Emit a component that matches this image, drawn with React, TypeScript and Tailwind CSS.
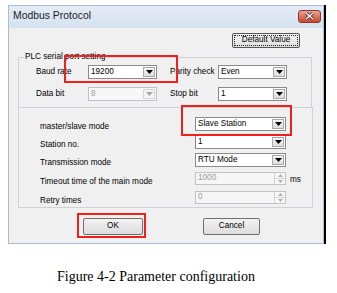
import React from "react";

const ui = { fontFamily: '"Liberation Sans", Arial, sans-serif' };

function Arrow({ color = "#000" }: { color?: string }) {
  return (
    <svg width="7" height="4" viewBox="0 0 7 4">
      <path d="M0 0H7L3.5 4Z" fill={color} />
    </svg>
  );
}

function Combo({
  value,
  w,
  disabled,
}: {
  value: string;
  w: string;
  disabled?: boolean;
}) {
  return (
    <div
      className={`flex h-[14px] items-stretch border ${w} ${
        disabled
          ? "border-[#c2c2c2] bg-[#f7f7f7] text-[#9a9a9a]"
          : "border-[#8a8a8a] bg-white text-black"
      }`}
    >
      <div className="flex flex-1 items-center pl-[2px] leading-none">{value}</div>
      <div
        className={`m-[1px] flex w-[12px] items-center justify-center border ${
          disabled
            ? "border-[#d6d6d6] bg-[#f4f4f4]"
            : "border-[#a8a8a8] bg-gradient-to-b from-[#f6f6f6] to-[#dedede]"
        }`}
      >
        <Arrow color={disabled ? "#a8a8a8" : "#000"} />
      </div>
    </div>
  );
}

function Spin({ value }: { value: string }) {
  return (
    <div className="flex h-[13px] w-[91px] items-stretch border border-[#c2c2c2] bg-[#f6f6f6] text-[#9a9a9a]">
      <div className="flex flex-1 items-center pl-[2px] leading-none">{value}</div>
      <div className="flex w-[11px] flex-col border-l border-[#d6d6d6]">
        <div className="flex flex-1 items-center justify-center border-b border-[#d6d6d6]">
          <svg width="5" height="3" viewBox="0 0 5 3">
            <path d="M0 3H5L2.5 0Z" fill="#b0b0b0" />
          </svg>
        </div>
        <div className="flex flex-1 items-center justify-center">
          <svg width="5" height="3" viewBox="0 0 5 3">
            <path d="M0 0H5L2.5 3Z" fill="#b0b0b0" />
          </svg>
        </div>
      </div>
    </div>
  );
}

function Button({ label, className }: { label: string; className: string }) {
  return (
    <div
      className={`flex h-[17px] items-center justify-center rounded-[2px] border border-[#707070] bg-gradient-to-b from-[#f3f3f3] to-[#dcdcdc] ${className}`}
    >
      {label}
    </div>
  );
}

function Row({ label, className, children }: { label: string; className: string; children: React.ReactNode }) {
  return (
    <div className={`flex h-[14px] items-start ${className}`}>
      <span className="w-[155px] shrink-0 pt-[5px] leading-[10px]">{label}</span>
      {children}
    </div>
  );
}

export default function App() {
  return (
    <div className="relative h-[293px] w-[337px] overflow-hidden bg-white">
      {/* dialog window */}
      <div className="ml-[8px] mt-[5px] w-[318px] border-r-2 border-black">
        <div className="flex h-[239px] w-[316px] flex-col border border-[#a9bdd4] text-[8.2px]" style={ui}>
          <div className="flex h-[22px] items-center justify-between bg-gradient-to-b from-[#e4ecf6] to-[#d6e2f0] pl-[4px] pr-[2px]">
            <span className="pb-[2px] text-[10.4px] text-[#1b1b1b]">Modbus Protocol</span>
            <div className="mb-[2px] flex h-[13px] w-[23px] items-center justify-center rounded-[3px] border border-[#8a3a2c] bg-gradient-to-b from-[#e8a593] to-[#c6452d]">
              <svg width="9" height="8" viewBox="0 0 9 8">
                <path d="M1 1L8 7M8 1L1 7" stroke="#5a2017" strokeWidth="3" />
                <path d="M1 1L8 7M8 1L1 7" stroke="#fff" strokeWidth="1.6" />
              </svg>
            </div>
          </div>

          <div className="flex-1 bg-[#f0f0f0]">
            <div className="flex justify-end pr-[23px] pt-[5px]">
              <div className="flex h-[15px] w-[68px] items-center justify-center rounded-[2px] border border-[#555] bg-gradient-to-b from-[#f4f4f4] to-[#dedede] p-[1px]">
                <div className="flex h-full w-full items-center justify-center border border-dotted border-[#222]">
                  Default Value
                </div>
              </div>
            </div>

            {/* PLC serial port setting */}
            <div className="relative ml-[9px] mt-[9px] h-[51px] w-[294px] border border-[#cdd3d8]">
              <span className="absolute left-[5px] top-[-6px] bg-[#f0f0f0] px-[1px] leading-[10px]">
                PLC serial port setting
              </span>
              <div className="flex flex-col gap-[8px] pl-[17px] pt-[7px]">
                <div className="flex items-center">
                  <span className="w-[52px]">Baud rate</span>
                  <Combo value="19200" w="w-[69px]" />
                  <span className="ml-[13px] w-[48px]">Parity check</span>
                  <Combo value="Even" w="w-[69px]" />
                </div>
                <div className="flex items-center">
                  <span className="w-[52px]">Data bit</span>
                  <Combo value="8" w="w-[69px]" disabled />
                  <span className="ml-[13px] w-[48px]">Stop bit</span>
                  <Combo value="1" w="w-[69px]" />
                </div>
              </div>
            </div>

            {/* mode settings */}
            <div className="-mt-[1px] ml-[9px] h-[101px] w-[295px] border border-[#cdd3d8] pl-[21px] pt-[9px]">
              <Row label="master/slave mode" className="">
                <Combo value="Slave Station" w="w-[91px]" />
              </Row>
              <Row label="Station no." className="mt-[4px]">
                <Combo value="1" w="w-[91px]" />
              </Row>
              <Row label="Transmission mode" className="mt-[4px]">
                <Combo value="RTU Mode" w="w-[91px]" />
              </Row>
              <Row label="Timeout time of the main mode" className="mt-[5px]">
                <Spin value="1000" />
                <span className="ml-[4px] pt-[3px] leading-[10px]">ms</span>
              </Row>
              <Row label="Retry times" className="mt-[5px]">
                <Spin value="0" />
              </Row>
            </div>

            <div className="mt-[10px] flex">
              <Button label="OK" className="ml-[74px] w-[60px]" />
              <Button label="Cancel" className="ml-[60px] w-[57px]" />
            </div>
          </div>
        </div>
      </div>

      <p
        className="mt-[22px] pl-[57px] text-[14px] text-black"
        style={{ fontFamily: '"Liberation Serif", "Times New Roman", serif' }}
      >
        Figure 4-2 Parameter configuration
      </p>

      {/* red annotation boxes */}
      <div className="absolute left-[64px] top-[55px] h-[28px] w-[114px] border-2 border-[#f0201c]" />
      <div className="absolute left-[181px] top-[105px] h-[31px] w-[111px] border-2 border-[#f0201c]" />
      <div className="absolute left-[77px] top-[213px] h-[25px] w-[69px] border-2 border-[#f0201c]" />
    </div>
  );
}
